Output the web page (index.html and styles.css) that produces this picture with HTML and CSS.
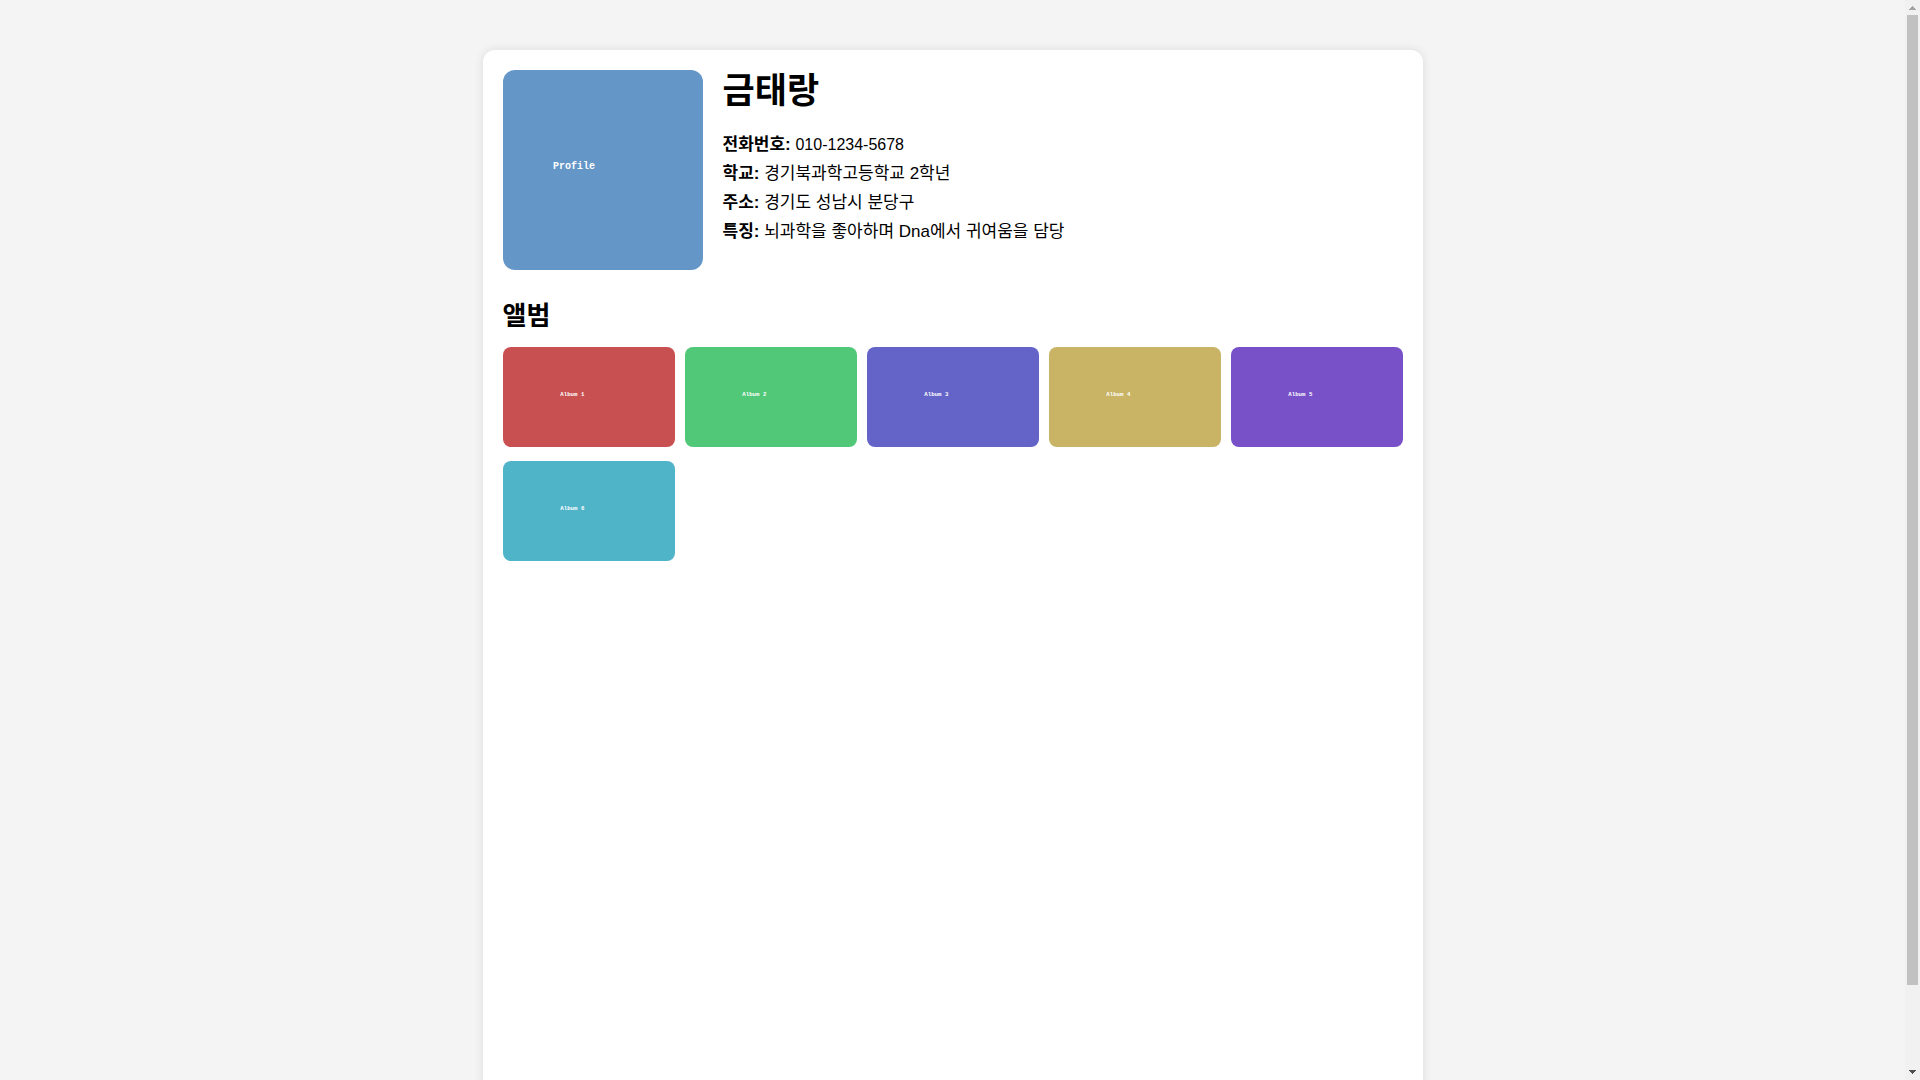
FILE: index.html
```
<!DOCTYPE html>
<html lang="ko">

<head>
    <meta charset="UTF-8">
    <meta name="viewport" content="width=device-width, initial-scale=1.0">
    <title>금태랑</title>
    <link rel="stylesheet" href="styles.css">
</head>

<body>
    <div class="container">
        <div class="profile">
            <svg class="profile-img" viewBox="0 0 200 200" role="img" aria-label="Profile">
                <rect width="200" height="200" fill="#6496c8"/>
                <text x="50" y="99">Profile</text>
            </svg>
            <div class="info">
                <h1>금태랑</h1>
                <p><strong>전화번호:</strong> <span class="phone">010-1234-5678</span></p>
                <p><strong>학교:</strong> 경기북과학고등학교 2학년</p>
                <p><strong>주소:</strong> 경기도 성남시 분당구</p>
                <p><strong>특징:</strong> 뇌과학을 좋아하며 Dna에서 귀여움을 담당</p>
            </div>
        </div>

        <div class="album">
            <h2>앨범</h2>
            <div class="album-grid">
                <svg viewBox="0 0 300 200" preserveAspectRatio="xMidYMid slice" role="img" aria-label="Album 1">
                    <rect width="300" height="200" fill="#c85050"/>
                    <text x="100" y="99">Album 1</text>
                </svg>
                <svg viewBox="0 0 300 200" preserveAspectRatio="xMidYMid slice" role="img" aria-label="Album 2">
                    <rect width="300" height="200" fill="#50c878"/>
                    <text x="100" y="99">Album 2</text>
                </svg>
                <svg viewBox="0 0 300 200" preserveAspectRatio="xMidYMid slice" role="img" aria-label="Album 3">
                    <rect width="300" height="200" fill="#6464c8"/>
                    <text x="100" y="99">Album 3</text>
                </svg>
                <svg viewBox="0 0 300 200" preserveAspectRatio="xMidYMid slice" role="img" aria-label="Album 4">
                    <rect width="300" height="200" fill="#c8b464"/>
                    <text x="100" y="99">Album 4</text>
                </svg>
                <svg viewBox="0 0 300 200" preserveAspectRatio="xMidYMid slice" role="img" aria-label="Album 5">
                    <rect width="300" height="200" fill="#7850c8"/>
                    <text x="100" y="99">Album 5</text>
                </svg>
                <svg viewBox="0 0 300 200" preserveAspectRatio="xMidYMid slice" role="img" aria-label="Album 6">
                    <rect width="300" height="200" fill="#50b4c8"/>
                    <text x="100" y="99">Album 6</text>
                </svg>
            </div>
        </div>
    </div>

    <div class="scrollbar" aria-hidden="true">
        <svg viewBox="0 0 15 15"><path d="M4 10h7v-1h-1v-1h-1v-1h-1v-1h-1v1h-1v1h-1v1h-1z" fill="#a3a3a3"/></svg>
        <div class="track">
            <div class="thumb"></div>
        </div>
        <svg viewBox="0 0 15 15"><path d="M4 5h7v1h-1v1h-1v1h-1v1h-1v-1h-1v-1h-1v-1h-1z" fill="#505050"/></svg>
    </div>
</body>

</html>
```

FILE: styles.css
```
body {
    font-family: "Liberation Sans", Arial, "Noto Sans CJK KR", sans-serif;
    font-size: 17px;
    line-height: 24px;
    color: #000;
    background-color: #f4f4f4;
    margin: 0;
    padding: 0 15px 0 0;
    height: 100vh;
    display: flex;
    justify-content: center;
}

.container {
    width: 100%;
    max-width: 900px;
    min-height: 100vh;
    margin-top: 50px;
    padding: 20px;
    background: #fff;
    border-radius: 12px;
    box-shadow: 0 0 10px rgba(0, 0, 0, 0.1);
}

.profile {
    display: flex;
    gap: 20px;
    margin-bottom: 30px;
}

.profile-img {
    width: 200px;
    height: 200px;
    flex-shrink: 0;
    border-radius: 12px;
}

.info h1 {
    margin: 0 0 21px;
    font-size: 35px;
    line-height: 42px;
}

.info p {
    margin: 5px 0;
}

.phone {
    font-size: 16px;
}

.album h2 {
    margin: 0 0 15px;
    font-size: 26px;
    line-height: 32px;
}

.album-grid {
    display: grid;
    grid-template-columns: repeat(5, 1fr);
    gap: 14px 10px;
}

.album-grid svg {
    width: 100%;
    height: 100px;
    border-radius: 8px;
}

svg text {
    fill: #fff;
    font-family: "Liberation Mono", monospace;
    font-size: 10px;
    font-weight: bold;
}

/* scrollbar */
.scrollbar {
    position: fixed;
    top: 0;
    right: 0;
    bottom: 0;
    width: 15px;
    display: flex;
    flex-direction: column;
    background: #f1f1f1;
}

.scrollbar svg {
    height: 15px;
}

.track {
    flex: 1;
    padding: 0 2px;
}

.thumb {
    height: 92.4%;
    background: #c1c1c1;
}
```
